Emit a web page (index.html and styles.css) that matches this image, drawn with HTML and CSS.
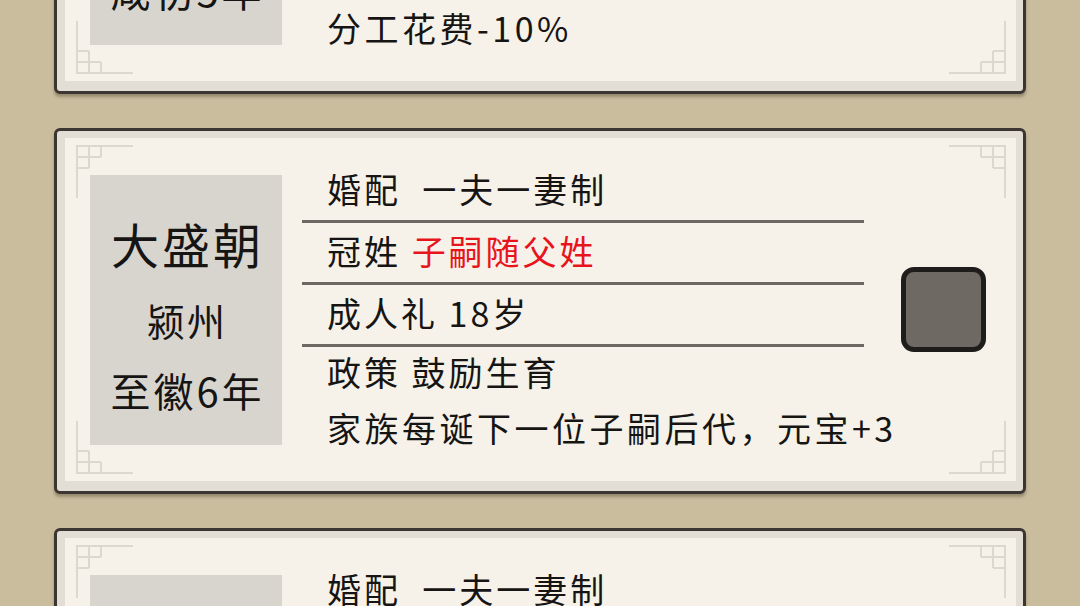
FILE: index.html
```html
<!DOCTYPE html>
<html lang="zh-CN">
<head>
    <meta charset="UTF-8">
    <meta name="viewport" content="width=device-width, initial-scale=1.0">
    <title>家族风俗</title>
    <link rel="stylesheet" href="styles.css">
</head>
<body>

    <div class="list">
        <!-- 咸初朝 -->
        <div class="card">
            <div class="card-body">
                <svg class="corner tl" width="58" height="54" viewBox="0 0 58 54"><path d="M1 53V1H57M13 1V23M25 1V12M1 12H25M1 23H13"/></svg>
                <svg class="corner tr" width="58" height="54" viewBox="0 0 58 54"><path d="M1 53V1H57M13 1V23M25 1V12M1 12H25M1 23H13"/></svg>
                <svg class="corner bl" width="58" height="54" viewBox="0 0 58 54"><path d="M1 53V1H57M13 1V23M25 1V12M1 12H25M1 23H13"/></svg>
                <svg class="corner br" width="58" height="54" viewBox="0 0 58 54"><path d="M1 53V1H57M13 1V23M25 1V12M1 12H25M1 23H13"/></svg>
                <div class="realm">
                    <div class="realm-name">大盛朝</div>
                    <div class="realm-place">颍州</div>
                    <div class="realm-year">咸初5年</div>
                </div>
                <div class="rules">
                    <div class="rule">婚配  一夫一妻制</div>
                    <div class="rule">冠姓 <span class="hl">子嗣随父姓</span></div>
                    <div class="rule">成人礼 18岁</div>
                    <div class="rule short">政策 勤俭持家</div>
                    <div class="rule short">分工花费-10%</div>
                </div>
                <div class="check"></div>
            </div>
        </div>

        <!-- 大盛朝 -->
        <div class="card">
            <div class="card-body">
                <svg class="corner tl" width="58" height="54" viewBox="0 0 58 54"><path d="M1 53V1H57M13 1V23M25 1V12M1 12H25M1 23H13"/></svg>
                <svg class="corner tr" width="58" height="54" viewBox="0 0 58 54"><path d="M1 53V1H57M13 1V23M25 1V12M1 12H25M1 23H13"/></svg>
                <svg class="corner bl" width="58" height="54" viewBox="0 0 58 54"><path d="M1 53V1H57M13 1V23M25 1V12M1 12H25M1 23H13"/></svg>
                <svg class="corner br" width="58" height="54" viewBox="0 0 58 54"><path d="M1 53V1H57M13 1V23M25 1V12M1 12H25M1 23H13"/></svg>
                <div class="realm">
                    <div class="realm-name">大盛朝</div>
                    <div class="realm-place">颍州</div>
                    <div class="realm-year">至徽6年</div>
                </div>
                <div class="rules">
                    <div class="rule">婚配  一夫一妻制</div>
                    <div class="rule">冠姓 <span class="hl">子嗣随父姓</span></div>
                    <div class="rule">成人礼 18岁</div>
                    <div class="rule short">政策 鼓励生育</div>
                    <div class="rule short">家族每诞下一位子嗣后代，元宝+3</div>
                </div>
                <div class="check"></div>
            </div>
        </div>

        <!-- 下一条 -->
        <div class="card">
            <div class="card-body">
                <svg class="corner tl" width="58" height="54" viewBox="0 0 58 54"><path d="M1 53V1H57M13 1V23M25 1V12M1 12H25M1 23H13"/></svg>
                <svg class="corner tr" width="58" height="54" viewBox="0 0 58 54"><path d="M1 53V1H57M13 1V23M25 1V12M1 12H25M1 23H13"/></svg>
                <svg class="corner bl" width="58" height="54" viewBox="0 0 58 54"><path d="M1 53V1H57M13 1V23M25 1V12M1 12H25M1 23H13"/></svg>
                <svg class="corner br" width="58" height="54" viewBox="0 0 58 54"><path d="M1 53V1H57M13 1V23M25 1V12M1 12H25M1 23H13"/></svg>
                <div class="realm">
                    <div class="realm-name">大盛朝</div>
                    <div class="realm-place">颍州</div>
                    <div class="realm-year">至徽7年</div>
                </div>
                <div class="rules">
                    <div class="rule">婚配  一夫一妻制</div>
                    <div class="rule">冠姓 <span class="hl">子嗣随父姓</span></div>
                    <div class="rule">成人礼 18岁</div>
                    <div class="rule short">政策 鼓励生育</div>
                    <div class="rule short">家族每诞下一位子嗣后代，元宝+3</div>
                </div>
                <div class="check"></div>
            </div>
        </div>
    </div>

</body>
</html>
```

FILE: styles.css
```css
/* 基础 */
* {
    box-sizing: border-box;
    margin: 0;
    padding: 0;
}

body {
    background-color: #cabd9d;
    font-family: "Noto Sans CJK SC", "Noto Sans", sans-serif;
    color: #161514;
    overflow: hidden;
}

/* 卡片列表（已向上滚动一部分） */
.list {
    display: flex;
    flex-direction: column;
    gap: 34px;
    padding: 0 54px;
    margin-top: -272px;
}

.card {
    border: 3px solid #3b3631;
    border-radius: 6px;
    background-color: #e2ded5;
    padding: 7px 7px 10px 8px;
    box-shadow: 0 3px 3px rgba(60, 48, 30, 0.35);
}

.card-body {
    position: relative;
    height: 343px;
    background-color: #f6f2e9;
    display: flex;
    align-items: center;
    padding: 0 30px 0 25px;
}

/* 四角回纹 */
.corner {
    position: absolute;
    fill: none;
    stroke: #dcd8ce;
    stroke-width: 2;
}

.corner.tl { top: 7px; left: 11px; }
.corner.tr { top: 7px; right: 10px; transform: scaleX(-1); }
.corner.bl { bottom: 7px; left: 11px; transform: scaleY(-1); }
.corner.br { bottom: 7px; right: 10px; transform: scale(-1, -1); }

/* 左侧朝代信息 */
.realm {
    width: 192px;
    height: 270px;
    flex-shrink: 0;
    background-color: #d8d5cf;
    margin-right: 20px;
    display: flex;
    flex-direction: column;
    align-items: center;
    padding-top: 38px;
}

.realm-name {
    font-size: 48px;
    line-height: 60px;
    letter-spacing: 3px;
    margin-right: -3px;
}

.realm-place {
    font-size: 38px;
    line-height: 50px;
    margin-top: 22px;
    letter-spacing: 2px;
    margin-right: -2px;
}

.realm-year {
    font-size: 40px;
    line-height: 50px;
    margin-top: 20px;
    letter-spacing: 3px;
    margin-right: -3px;
}

/* 中间规则列表 */
.rules {
    width: 562px;
    flex-shrink: 0;
}

.rule {
    height: 62px;
    border-bottom: 3px solid #6c6862;
    padding-left: 25px;
    font-size: 34px;
    line-height: 56px;
    letter-spacing: 3px;
    white-space: pre;
}

.rule.short {
    height: 56px;
    line-height: 50px;
    border-bottom: none;
}

.rule.short:last-child {
    letter-spacing: 3.5px;
}

.hl {
    color: #e8141c;
}

/* 勾选框 */
.check {
    width: 85px;
    height: 85px;
    flex-shrink: 0;
    margin-left: 37px;
    border: 5px solid #1f1d1b;
    border-radius: 13px;
    background-color: #6e6a63;
}
```
